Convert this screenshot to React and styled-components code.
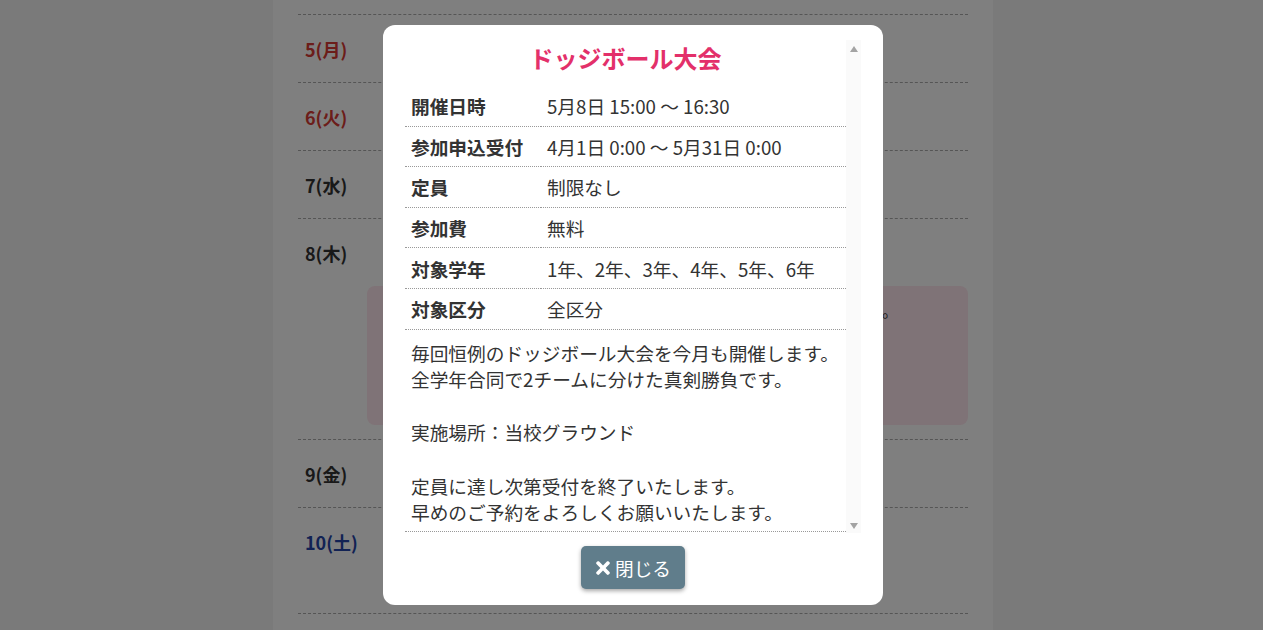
import React from 'react';
import styled, { createGlobalStyle } from 'styled-components';
import { FaTimes } from 'react-icons/fa';

const GlobalStyle = createGlobalStyle`
  html, body {
    margin: 0;
    padding: 0;
    background: #f4f4f4;
    font-family: "Noto Sans CJK JP", "Noto Sans", sans-serif;
    color: #333;
  }
`;

//* Fondo: la columna del calendario
const Page = styled.div`
  width: 720px;
  min-height: 630px;
  margin: 0 auto;
  padding: 0 25px;
  box-sizing: border-box;
  background: #fff;
  position: relative;
  left: 1.5px;
`;

const TopEdge = styled.div`
  height: 14px;
  border-bottom: 1px dashed #aaa;
`;

const DayRow = styled.div`
  border-bottom: 1px dashed #aaa;
  padding: 21px 0 ${p => p.$extra || 19}px;
`;

const DayLabel = styled.div`
  padding-left: 7px;
  font-size: 18px;
  line-height: 27px;
  font-weight: 700;
  color: ${p => (p.$kind === 'holiday' ? '#d83a34' : p.$kind === 'sat' ? '#2444a8' : '#333')};
`;

const EventBox = styled.div`
  margin: 19px 0 -5px 69px;
  height: 139px;
  border-radius: 8px;
  background: #fee6ee;
  padding: 12px 70px 12px 18px;
  box-sizing: border-box;
  font-size: 16px;
  line-height: 24px;
  text-align: right;
`;

//* Capa oscura y modal
const Overlay = styled.div`
  position: fixed;
  inset: 0;
  background: rgba(0, 0, 0, 0.5);
  display: flex;
  align-items: center;
  justify-content: center;
  padding-left: 3px;
`;

const Modal = styled.div`
  width: 500px;
  height: 580px;
  box-sizing: border-box;
  background: #fff;
  border-radius: 12px;
  padding: 15px 22px 16px;
  display: flex;
  flex-direction: column;
  align-items: center;
  gap: 13px;
`;

const ScrollArea = styled.div`
  width: 100%;
  height: 493px;
  display: flex;
`;

const Content = styled.div`
  flex: 1;
  overflow: hidden;
`;

//* Barra de scroll deshabilitada (dibujada)
const ScrollTrack = styled.div`
  width: 15px;
  background: #fafafa;
  display: flex;
  flex-direction: column;
  justify-content: space-between;
  align-items: center;
  padding: 6px 0 4px;
  box-sizing: border-box;
`;

const Arrow = styled.span`
  width: 0;
  height: 0;
  border-left: 4.5px solid transparent;
  border-right: 4.5px solid transparent;
  ${p => (p.$down ? 'border-top: 6px solid #a3a3a3;' : 'border-bottom: 6px solid #a3a3a3;')}
`;

const Title = styled.h2`
  margin: 1px 0 12px;
  font-size: 24px;
  line-height: 33px;
  font-weight: 700;
  text-align: center;
  color: #e3306a;
`;

const Table = styled.table`
  width: 100%;
  border-collapse: collapse;
  font-size: 18.7px;
  line-height: 27px;
`;

const Row = styled.tr`
  border-bottom: 1px dotted #999;
`;

const Head = styled.th`
  width: 124px;
  padding: 6.3px 6px;
  text-align: left;
  font-weight: 700;
  vertical-align: top;
  white-space: nowrap;
`;

const Cell = styled.td`
  padding: 6.3px 6px;
  font-weight: 400;
  vertical-align: top;
`;

const Description = styled.td`
  padding: 10px 6px 5px;
  white-space: pre-line;
  line-height: 26.6px;
`;

const CloseButton = styled.button`
  display: flex;
  align-items: center;
  gap: 5px;
  height: 43px;
  padding: 0 14px 0 15px;
  border: none;
  border-radius: 5px;
  background: #607d8b;
  color: #fff;
  font-family: inherit;
  font-size: 18.7px;
  box-shadow: 0 2px 4px rgba(0, 0, 0, 0.35);
  cursor: pointer;

  svg {
    width: 14px;
    height: 20px;
  }
`;

const dias = [
  { label: '5(月)', kind: 'holiday' },
  { label: '6(火)', kind: 'holiday' },
  { label: '7(水)' },
  { label: '8(木)', event: true },
  { label: '9(金)' },
  { label: '10(土)', kind: 'sat', extra: 57 },
];

const detalles = [
  ['開催日時', '5月8日 15:00 〜 16:30'],
  ['参加申込受付', '4月1日 0:00 〜 5月31日 0:00'],
  ['定員', '制限なし'],
  ['参加費', '無料'],
  ['対象学年', '1年、2年、3年、4年、5年、6年'],
  ['対象区分', '全区分'],
];

const texto = `毎回恒例のドッジボール大会を今月も開催します。
全学年合同で2チームに分けた真剣勝負です。

実施場所：当校グラウンド

定員に達し次第受付を終了いたします。
早めのご予約をよろしくお願いいたします。`;

export default function App() {
  return (
    <>
      <GlobalStyle />
      <Page>
        <TopEdge />
        {dias.map(d => (
          <DayRow key={d.label} $extra={d.extra}>
            <DayLabel $kind={d.kind}>{d.label}</DayLabel>
            {d.event && <EventBox>ドッジボール大会を開催します。</EventBox>}
          </DayRow>
        ))}
      </Page>

      <Overlay>
        <Modal>
          <ScrollArea>
            <Content>
              <Title>ドッジボール大会</Title>
              <Table>
                <tbody>
                  {detalles.map(([k, v]) => (
                    <Row key={k}>
                      <Head>{k}</Head>
                      <Cell>{v}</Cell>
                    </Row>
                  ))}
                  <Row>
                    <Description colSpan={2}>{texto}</Description>
                  </Row>
                </tbody>
              </Table>
            </Content>
            <ScrollTrack>
              <Arrow />
              <Arrow $down />
            </ScrollTrack>
          </ScrollArea>
          <CloseButton>
            <FaTimes />
            閉じる
          </CloseButton>
        </Modal>
      </Overlay>
    </>
  );
}
